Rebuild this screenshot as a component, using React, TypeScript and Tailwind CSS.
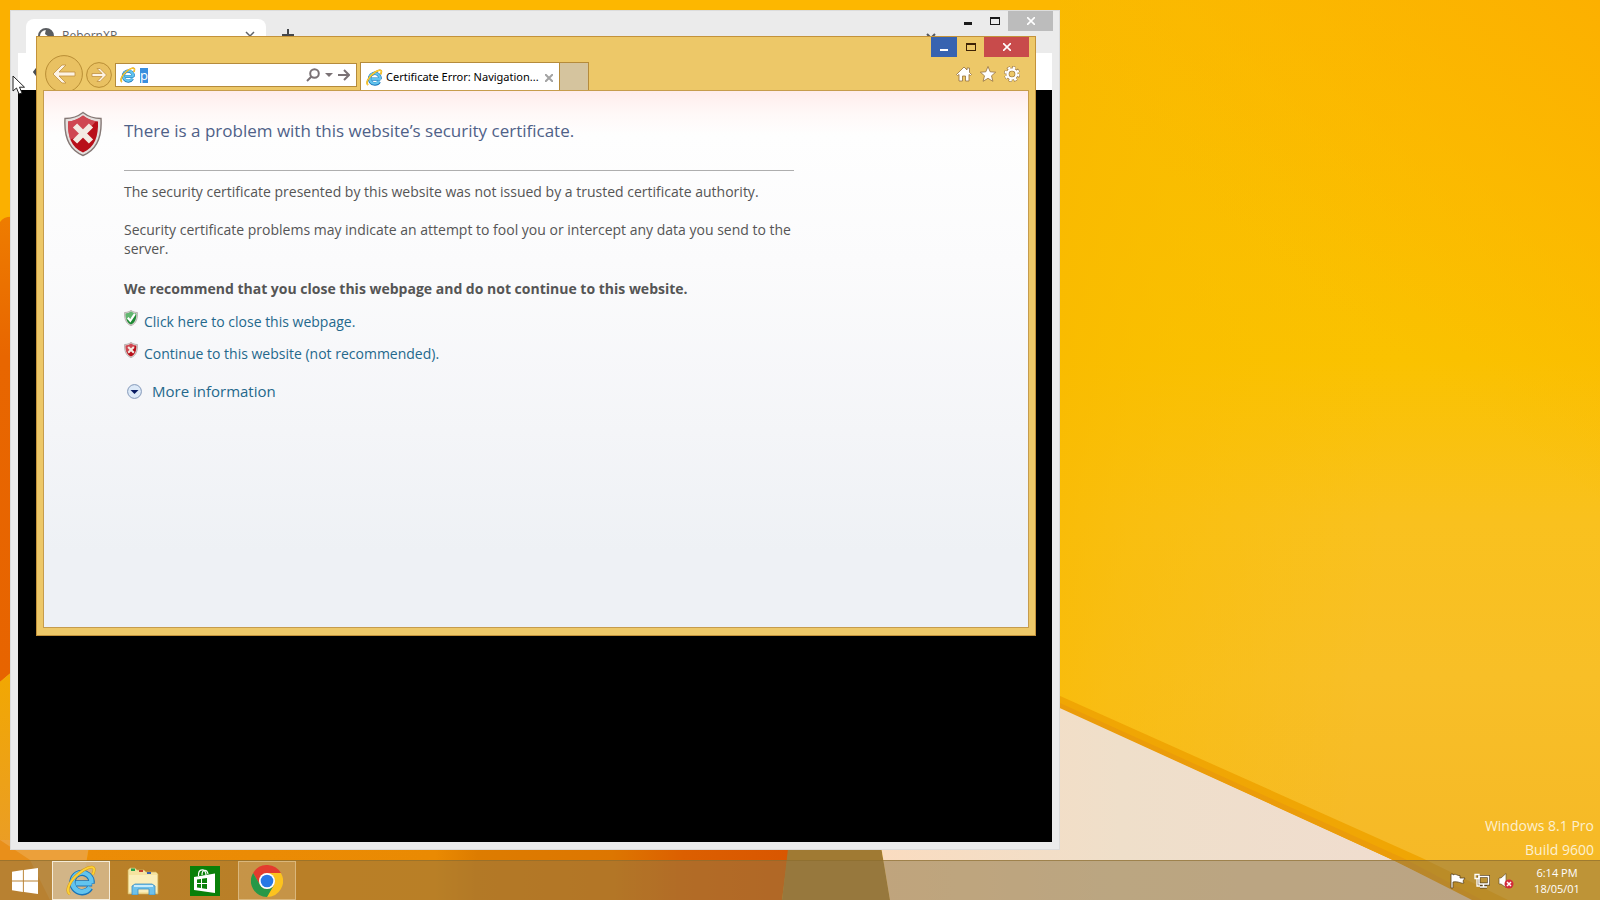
import type { ReactNode } from "react";

function Wallpaper() {
  return (
    <svg
      className="absolute inset-0 h-full w-full"
      viewBox="0 0 1600 900"
      preserveAspectRatio="none"
      aria-hidden="true"
    >
      <defs>
        <linearGradient id="sky" x1="0" y1="0" x2="0" y2="1">
          <stop offset="0" stopColor="#fbba00" />
          <stop offset="0.4" stopColor="#fac200" />
          <stop offset="0.58" stopColor="#f9c11e" />
          <stop offset="0.75" stopColor="#f8bf27" />
          <stop offset="1" stopColor="#f5b827" />
        </linearGradient>
        <linearGradient id="glow" x1="0" y1="0" x2="1" y2="0.2">
          <stop offset="0" stopColor="#f9b900" />
          <stop offset="0.25" stopColor="#f9bc00" stopOpacity="0.5" />
          <stop offset="0.7" stopColor="#f9c000" stopOpacity="0" />
        </linearGradient>
        <linearGradient id="corner" x1="1" y1="0" x2="0.5" y2="0.6">
          <stop offset="0" stopColor="#fcb000" />
          <stop offset="1" stopColor="#fcb800" stopOpacity="0" />
        </linearGradient>
        <linearGradient id="edge" x1="0" y1="0" x2="0" y2="1">
          <stop offset="0" stopColor="#ee7c00" />
          <stop offset="0.3" stopColor="#e86600" />
          <stop offset="1" stopColor="#e76400" />
        </linearGradient>
        <linearGradient id="left" x1="0" y1="0" x2="0" y2="1">
          <stop offset="0" stopColor="#f2a800" />
          <stop offset="1" stopColor="#e89a30" />
        </linearGradient>
        <linearGradient id="floor" x1="0" y1="0" x2="1" y2="0">
          <stop offset="0" stopColor="#ec8c06" />
          <stop offset="0.5" stopColor="#ea8a02" />
          <stop offset="0.56" stopColor="#dd7c00" />
          <stop offset="0.75" stopColor="#dd7600" />
          <stop offset="0.85" stopColor="#dc5f00" />
          <stop offset="1" stopColor="#d95600" />
        </linearGradient>
        <linearGradient id="peach" x1="0" y1="0" x2="1" y2="0">
          <stop offset="0" stopColor="#fadcc0" />
          <stop offset="0.4" stopColor="#efdfca" />
          <stop offset="1" stopColor="#f0dcd0" />
        </linearGradient>
      </defs>
      <rect width="1600" height="900" fill="url(#sky)" />
      <rect x="1050" width="550" height="900" fill="url(#glow)" />
      <rect x="1050" width="550" height="500" fill="url(#corner)" />
      <rect width="1060" height="40" fill="#fdb700" />
      <rect width="20" height="235" fill="#fbb000" />
      <path d="M0 230 V222 Q5 214 20 218 V665 L0 682Z" fill="url(#edge)" />
      <path d="M0 682 L20 665 V900 H0Z" fill="url(#left)" />
      <path d="M0 840 H90 L80 900 H0Z" fill="#eca03a" />
      <path d="M0 840 L30 860 L50 900 H0Z" fill="#e98f1a" />
      <path d="M90 840 H790 L782 900 H80Z" fill="url(#floor)" />
      <path d="M789 840 H880 L890 900 H782Z" fill="#a07a33" />
      <path d="M880 840 L1040 696 L1480 900 H890Z" fill="url(#peach)" />
      <path d="M1040 687 L1422 858 L1508 900 H1476 L1395 861 L1040 698Z" fill="#f0a604" />
      <path d="M1040 694 L1405 859 L1482 900 H1472 L1395 861 L1040 699Z" fill="#eb9c0a" />
    </svg>
  );
}

function IeLogo({ className }: { className: string }) {
  return (
    <svg className={className} viewBox="0 0 32 32" fill="none" aria-hidden="true">
      <path d="M27 19 H10 M26.5 19 A10 10 0 1 0 25 23.5" stroke="#1873b8" strokeWidth="6.4" />
      <path d="M26.5 18.8 H10 M26.3 18.6 A9.8 9.8 0 1 0 24.8 23" stroke="#62c4ee" strokeWidth="4.6" />
      <path
        d="M4 30 C-1 27 4 16 13 9 C20 3 28 0 29 4 C29.400 6 28.500 8 27.500 10"
        stroke="#d99a12"
        strokeWidth="3"
      />
      <path
        d="M4 30 C-1 27 4 16 13 9 C20 3 28 0 29 4 C29.400 6 28.500 8 27.500 10"
        stroke="#fcd136"
        strokeWidth="2"
      />
    </svg>
  );
}

function Shield({ className, good }: { className: string; good?: boolean }) {
  return (
    <svg className={className} viewBox="0 0 38 45" aria-hidden="true">
      <path
        d="M19 1 C14 5 8 7 1 7 C0 24 4 38 19 44 C34 38 38 24 37 7 C30 7 24 5 19 1Z"
        fill="#e4e0de"
        stroke="#857875"
        strokeWidth="1.400"
      />
      <path
        d="M19 4 C14 8 9 9.500 4 10 C3.500 24 7 36 19 41 C31 36 34.500 24 34 10 C29 9.500 24 8 19 4Z"
        fill={good ? "#1f8a35" : "#b80f1a"}
      />
      <path
        d="M19 4 C14 8 9 9.500 4 10 C3.800 17 4.500 23 6 28 C16 25 26 18 32 9.500 C27 9 23 7 19 4Z"
        fill={good ? "#7fc98a" : "#d9606a"}
        opacity="0.7"
      />
      {good ? (
        <path d="M10 22 L17 30 L30 11" fill="none" stroke="#fff" strokeWidth="6" />
      ) : (
        <path d="M11 14 L27 30 M27 14 L11 30" fill="none" stroke="#f3ebe2" strokeWidth="6" />
      )}
    </svg>
  );
}

function ChromeLogo() {
  return (
    <svg className="size-8" viewBox="0 0 48 48" aria-hidden="true">
      <path d="M3.200 12 A24 24 0 0 1 44.800 12 H24 A12 12 0 0 0 13.600 30Z" fill="#e33b2e" />
      <path d="M44.800 12 A24 24 0 0 1 24 48 L34.400 30 A12 12 0 0 0 24 12Z" fill="#fcc31e" />
      <path d="M24 48 A24 24 0 0 1 3.200 12 L13.600 30 A12 12 0 0 0 34.400 30Z" fill="#279847" />
      <circle cx="24" cy="24" r="12" fill="#fff" />
      <circle cx="24" cy="24" r="9.500" fill="#2878e4" />
    </svg>
  );
}

function ChromeWindow() {
  return (
    <section
      aria-label="RebornXP"
      className="absolute top-2.5 right-[540px] bottom-2.5 left-2.5 flex flex-col border border-[#dcdcdc] bg-[#ebebeb] px-[7px] pb-[7px]"
    >
      <header className="-mr-px flex h-[42px] shrink-0 items-start">
        <div className="mt-2 ml-2 flex h-[34px] w-60 items-center gap-2 rounded-t-lg bg-white pr-2.5 pl-3">
          <svg className="size-4" viewBox="0 0 16 16" aria-hidden="true">
            <circle cx="8" cy="8" r="7" fill="#fff" stroke="#5a5d61" strokeWidth="2" />
            <path d="M8 1 C12 1 15 4 15 8 L11 9 L7 6Z" fill="#5a5d61" />
          </svg>
          <span className="flex-1 text-xs text-[#5f6368]">RebornXP</span>
          <button aria-label="Close tab">
            <svg className="size-3" viewBox="0 0 12 12" stroke="#5f6368" strokeWidth="1.500" aria-hidden="true">
              <path d="M2 2 L10 10 M10 2 L2 10" />
            </svg>
          </button>
        </div>
        <button aria-label="New tab" className="mt-[18px] ml-4">
          <svg className="size-3" viewBox="0 0 12 12" stroke="#45484c" strokeWidth="2" aria-hidden="true">
            <path d="M6 0 V12 M0 6 H12" />
          </svg>
        </button>
        <div className="flex-1" />
        <button aria-label="Search tabs" className="mt-[22px] mr-[18px]">
          <svg className="h-2 w-2.5" viewBox="0 0 10 8" fill="none" stroke="#55585c" strokeWidth="2" aria-hidden="true">
            <path d="M1 1 L5 5 L9 1" />
          </svg>
        </button>
        <button aria-label="Minimize" className="flex h-5 w-[27px] items-center justify-center">
          <span className="mt-1 h-[3px] w-2 bg-[#1a1a1a]" />
        </button>
        <button aria-label="Maximize" className="flex h-5 w-[27px] items-center justify-center">
          <span className="h-2 w-2.5 border border-t-2 border-[#1a1a1a]" />
        </button>
        <button aria-label="Close" className="flex h-5 w-[45px] items-center justify-center bg-[#bcbcbc]">
          <CloseMark />
        </button>
      </header>
      <div className="flex h-[37px] shrink-0 items-center bg-white pl-[15px]">
        <svg className="h-2.5 w-3" viewBox="0 0 12 10" fill="none" stroke="#4a4d51" strokeWidth="2" aria-hidden="true">
          <path d="M5 0 L1 5 L5 10 M1 5 H12" />
        </svg>
      </div>
      <div className="flex-1 bg-black" />
    </section>
  );
}

function CloseMark() {
  return (
    <svg className="size-2" viewBox="0 0 8 8" stroke="#fff" strokeWidth="1.600" aria-hidden="true">
      <path d="M0 0 L8 8 M8 0 L0 8" />
    </svg>
  );
}

function IeHeader() {
  return (
    <header className="flex h-[53px] shrink-0 items-end pl-0.5">
      <button aria-label="Back" className="h-[35px] overflow-hidden">
        <svg className="size-[38px]" viewBox="0 0 38 38" aria-hidden="true">
          <circle cx="19" cy="19" r="18.400" fill="#e9c162" stroke="#b98e35" />
          <path
            d="M8 19 L17 10 H21 L14 17 H30 V21 H14 L21 28 H17Z"
            fill="#fdf3e4"
            stroke="#c09040"
            strokeWidth="0.800"
          />
        </svg>
      </button>
      <button aria-label="Forward" className="mb-0.5 ml-[3px]">
        <svg className="size-[26px]" viewBox="0 0 26 26" aria-hidden="true">
          <circle cx="13" cy="13" r="12.400" fill="#e9c162" stroke="#b98e35" />
          <path
            d="M20.500 13 L14 6.500 H11 L16 11.500 H6 V14.500 H16 L11 19.500 H14Z"
            fill="#fdf3e4"
            stroke="#c09040"
            strokeWidth="0.800"
          />
        </svg>
      </button>
      <div className="mb-[3px] ml-[3px] flex h-6 w-[242px] items-center border border-[#b58b3b] bg-white pr-1.5 pl-1">
        <IeLogo className="size-4" />
        <input
          aria-label="Address"
          defaultValue="p"
          className="ml-1 h-[15px] w-2 bg-[#3a8fde] text-[13px] leading-none text-white outline-none"
        />
        <div className="flex-1" />
        <button aria-label="Search">
          <svg className="size-3.5" viewBox="0 0 14 14" fill="none" stroke="#7a7275" strokeWidth="2" aria-hidden="true">
            <circle cx="8.500" cy="5.500" r="4.300" />
            <path d="M5.500 8.500 L1 13" />
          </svg>
        </button>
        <button aria-label="Show address list" className="ml-[5px]">
          <svg className="h-1 w-2" viewBox="0 0 8 4" fill="#7a7275" aria-hidden="true">
            <path d="M0 0 H8 L4 4Z" />
          </svg>
        </button>
        <button aria-label="Go to" className="ml-[5px]">
          <svg className="size-3" viewBox="0 0 12 12" fill="none" stroke="#7a7275" strokeWidth="2" aria-hidden="true">
            <path d="M0 6 H11 M6 1 L11 6 L6 11" />
          </svg>
        </button>
      </div>
      <div className="ml-[3px] flex h-7 w-[200px] items-center border border-b-0 border-[#b58b3b] bg-white pt-0.5 pr-1.5 pl-[5px]">
        <IeLogo className="size-[17px] shrink-0" />
        <span className="ml-[3px] min-w-0 flex-1 font-['Noto_Sans','Open_Sans',sans-serif] text-[11px] whitespace-nowrap text-black">
          Certificate Error: Navigation...
        </span>
        <button aria-label="Close tab">
          <svg className="size-2" viewBox="0 0 8 8" stroke="#a3a3a3" strokeWidth="2" aria-hidden="true">
            <path d="M0 0 L8 8 M8 0 L0 8" />
          </svg>
        </button>
      </div>
      <button aria-label="New tab" className="h-7 w-[29px] border border-b-0 border-l-0 border-[#b58b3b] bg-[#d5c49e]" />
      <div className="flex-1" />
      <div className="flex h-full flex-col items-end">
        <div className="flex">
          <button aria-label="Minimize" className="flex h-5 w-[26px] items-center justify-center bg-[#3763b0]">
            <span className="mt-1.5 h-0.5 w-2 bg-white" />
          </button>
          <button aria-label="Maximize" className="flex h-5 w-[27px] items-center justify-center">
            <span className="h-2 w-2.5 border border-t-2 border-[#3d2205]" />
          </button>
          <button aria-label="Close" className="flex h-5 w-[45px] items-center justify-center bg-[#c84b4b]">
            <CloseMark />
          </button>
        </div>
        <div className="mt-[9px] mr-[9px] flex gap-2">
          <button aria-label="Home">
            <svg className="size-4" viewBox="0 0 16 16" fill="#fff" stroke="#94703e" strokeWidth="0.800" aria-hidden="true">
              <path d="M8 1 L11 4 V2 H13.500 V6.500 L15.500 8.500 L14.500 9.500 L13 8.500 V15 H9.500 V10 H6.500 V15 H3 V8.500 L1.500 9.500 L0.500 8.500Z" />
            </svg>
          </button>
          <button aria-label="Favorites">
            <svg className="size-4" viewBox="0 0 16 16" fill="#fff" stroke="#94703e" strokeWidth="0.800" aria-hidden="true">
              <path d="M8 0.500 L10.200 5.800 L15.700 6.200 L11.500 9.800 L12.900 15.300 L8 12.300 L3.100 15.300 L4.500 9.800 L0.300 6.200 L5.800 5.800Z" />
            </svg>
          </button>
          <button aria-label="Tools">
            <svg className="size-4" viewBox="0 0 16 16" fill="none" aria-hidden="true">
              <circle cx="8" cy="8" r="6.600" stroke="#94703e" strokeWidth="2.800" strokeDasharray="3.200 1.984" />
              <circle cx="8" cy="8" r="4.500" stroke="#8a6534" strokeWidth="3.600" />
              <circle cx="8" cy="8" r="6.400" stroke="#fff" strokeWidth="2.200" strokeDasharray="2.500 2.526" />
              <circle cx="8" cy="8" r="4.500" stroke="#fff" strokeWidth="2.400" />
            </svg>
          </button>
        </div>
      </div>
    </header>
  );
}

function CertificateWarning() {
  return (
    <main className="flex flex-1 items-start border border-[#c69c4c] bg-[linear-gradient(#ffeceb_0px,#fff8f7_22px,#fefefe_44px,#fbfbfc_170px,#f4f5f8_340px,#eef1f5_460px,#eef1f5_100%)] pt-5 pl-5 text-sm text-[#555]">
      <Shield className="h-[46px] w-[38px] shrink-0" />
      <div className="ml-[22px] w-[670px]">
        <h1 className="pt-2 text-[17px] leading-6 text-[#4f6188]">
          There is a problem with this website’s security certificate.
        </h1>
        <hr className="mt-[27px] border-[#aeaeae]" />
        <p className="mt-[11px] leading-[19px]">
          The security certificate presented by this website was not issued by a trusted certificate authority.
        </p>
        <p className="mt-[19px] leading-[19px]">
          Security certificate problems may indicate an attempt to fool you or intercept any data you send to the
          server.
        </p>
        <p className="mt-[21px] leading-[19px] font-bold">
          We recommend that you close this webpage and do not continue to this website.
        </p>
        <p className="mt-3 flex items-start gap-1.5 leading-5">
          <Shield good className="h-4 w-3.5" />
          <a href="#close" className="mt-0.5 text-[#24688c]">
            Click here to close this webpage.
          </a>
        </p>
        <p className="mt-2.5 flex items-start gap-1.5 leading-5">
          <Shield className="h-4 w-3.5" />
          <a href="#continue" className="mt-0.5 text-[#24688c]">
            Continue to this website (not recommended).
          </a>
        </p>
        <p className="mt-[15px] ml-[3px] flex items-center gap-2.5 text-[15px] leading-6">
          <svg className="size-[15px]" viewBox="0 0 15 15" aria-hidden="true">
            <circle cx="7.500" cy="7.500" r="6.900" fill="#dce9f8" stroke="#8297b8" />
            <path d="M3.500 6 H11.500 L7.500 10Z" fill="#071a63" />
          </svg>
          <a href="#more" className="text-[#24688c]">
            More information
          </a>
        </p>
      </div>
    </main>
  );
}

function IeWindow() {
  return (
    <section
      aria-label="Internet Explorer"
      className="absolute top-9 right-[564px] bottom-[224px] left-9 flex flex-col border border-[#c3923a] bg-[#edc868] px-1.5 pb-[7px]"
    >
      <IeHeader />
      <CertificateWarning />
    </section>
  );
}

function TaskButton({ label, look, children }: { label: string; look: string; children: ReactNode }) {
  return (
    <button aria-label={label} className={`flex h-[39px] w-[58px] items-center justify-center border ${look}`}>
      {children}
    </button>
  );
}

function Taskbar() {
  return (
    <footer className="relative flex h-10 shrink-0 items-center border-t border-[#8a6a2a]/60 bg-[#907646]/55 text-white">
      <button aria-label="Start" className="flex w-[52px] pl-3">
        <svg className="size-[26px]" viewBox="0 0 27 27" fill="#fff" aria-hidden="true">
          <path d="M0 4 L11.300 2.200 V13 H0Z M12.300 2 L27 0 V13 H12.300Z M0 14 H11.300 V24.800 L0 23Z M12.300 14 H27 V27 L12.300 25Z" />
        </svg>
      </button>
      <div className="flex flex-1 gap-1">
        <TaskButton label="Internet Explorer" look="border-[#f5ecd8] bg-[#e2d2b8]/60">
          <IeLogo className="size-[31px]" />
        </TaskButton>
        <TaskButton label="File Explorer" look="border-transparent">
          <svg className="h-7 w-8" viewBox="0 0 32 28" aria-hidden="true">
            <path d="M1 3 L3 1 H8 L10 3 H17 L19 5 H29 L31 7 V27 H1Z" fill="#f6e3a0" stroke="#cfae57" strokeWidth="0.700" />
            <path d="M4 1.500 H8 V4 H4Z" fill="#27a44a" />
            <path d="M12 3 H16 V5 H12Z" fill="#c8402c" />
            <path d="M20 5 H24 V7 H20Z" fill="#3b62b0" />
            <path d="M2 8 H30 V25 H2Z" fill="#fbeeba" />
            <path d="M5 28 V19 L8 17 H25 L28 19 V28 H22 V22 H11 V28Z" fill="#6ec1ea" stroke="#3f8dc0" strokeWidth="0.800" />
            <path d="M7 19 H26" stroke="#c9ecfa" strokeWidth="2" />
          </svg>
        </TaskButton>
        <TaskButton label="Store" look="border-transparent">
          <svg className="size-[30px]" viewBox="0 0 30 30" aria-hidden="true">
            <rect width="30" height="30" fill="#098009" />
            <path d="M8.500 10 C8 2 16 2 16 9 M12 9 C12 3 17 3 18 8" fill="none" stroke="#fff" strokeWidth="1.200" />
            <path d="M4 11 L25 7.500 V27 L4 24Z" fill="#fff" />
            <path d="M7 13.500 L11 13 V17 H7Z M12 12.800 L17 12 V17 H12Z M7 18 H11 V22 L7 21.500Z M12 18 H17 V23 L12 22.200Z" fill="#098009" />
          </svg>
        </TaskButton>
        <TaskButton label="Google Chrome" look="border-[#dab77c] bg-[#e0bd84]/35">
          <ChromeLogo />
        </TaskButton>
      </div>
      <div className="flex items-center gap-2">
        <svg className="size-4" viewBox="0 0 16 16" aria-hidden="true">
          <path d="M1 1 H3 V2 C6 0 7 3 10 2.500 V5 H15 L13 8 L14 10 C11 11 9 8 3 9 V15 H1Z" fill="#fff" stroke="#5b4420" strokeWidth="0.800" />
        </svg>
        <svg className="size-4" viewBox="0 0 16 16" fill="none" aria-hidden="true">
          <path d="M5 3.500 H14.500 V11 H5Z M9.500 11 V14 M6 14 H13" stroke="#5b4420" strokeWidth="3" />
          <path d="M5 3.500 H14.500 V11 H5Z M9.500 11 V14 M6 14 H13" stroke="#fff" strokeWidth="1.500" />
          <path d="M1 1.500 H5 V5.500 H1Z M3 6 V13 H6" stroke="#fff" strokeWidth="1.300" />
        </svg>
        <svg className="size-4" viewBox="0 0 16 16" aria-hidden="true">
          <path d="M1 5 H3 L8 0.500 V14.500 L3 11 H1Z" fill="#fff" stroke="#5b4420" strokeWidth="0.600" />
          <circle cx="11" cy="11" r="4.500" fill="#d32a3a" />
          <path d="M9 9 L13 13 M13 9 L9 13" stroke="#fff" strokeWidth="1.500" />
        </svg>
      </div>
      <time className="mr-[13px] ml-[13px] w-[60px] text-center text-[11px] leading-4">
        6:14 PM
        <br />
        18/05/01
      </time>
    </footer>
  );
}

export default function App() {
  return (
    <div className="relative flex h-screen flex-col overflow-hidden font-['Open_Sans','Noto_Sans',sans-serif]">
      <Wallpaper />
      <div className="relative flex-1">
        <p className="absolute right-1.5 -bottom-0.5 text-right text-sm leading-6 text-[#fdf0d0]">
          Windows 8.1 Pro
          <br />
          Build 9600
        </p>
        <ChromeWindow />
        <IeWindow />
        <svg className="absolute top-[75px] left-3 h-5 w-3.5" viewBox="0 0 14 20" aria-hidden="true">
          <path d="M1 1 V16 L4.500 13 L7 19 L10 18 L7.500 12.200 H12.500Z" fill="#fff" stroke="#222" />
        </svg>
      </div>
      <Taskbar />
    </div>
  );
}
